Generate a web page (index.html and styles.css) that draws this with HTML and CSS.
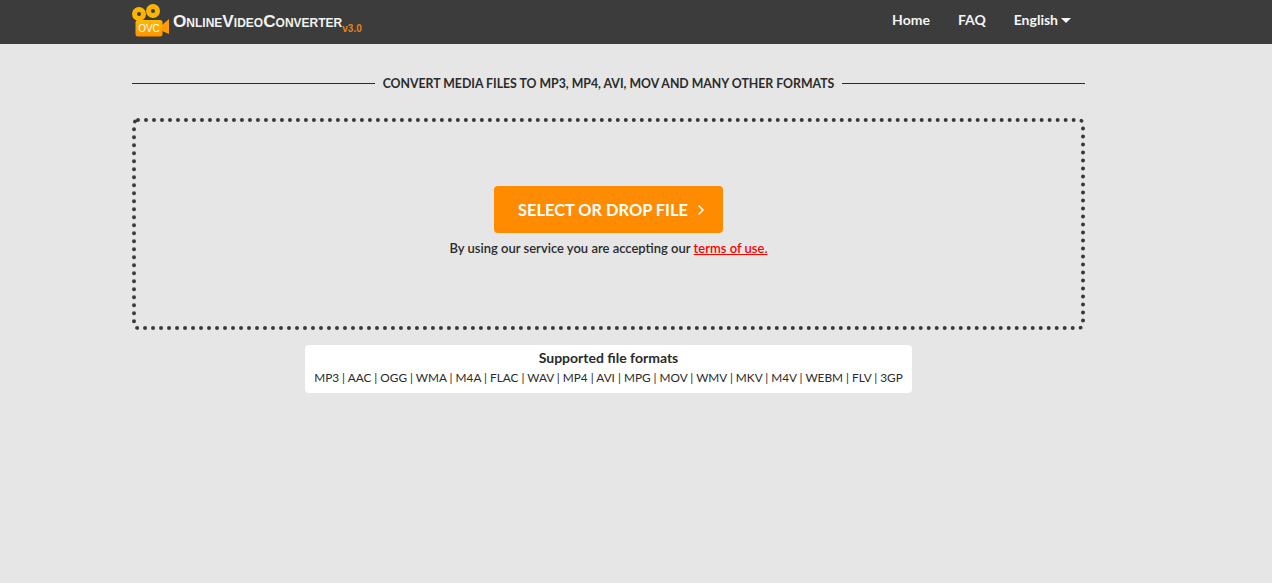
FILE: index.html
```html
<!DOCTYPE html>
<html lang="en">
<head>
    <meta charset="UTF-8">
    <title>OnlineVideoConverter</title>
    <link rel="stylesheet" href="styles.css">
</head>
<body>
    <div class="header">
        <div class="header-inner">
            <a href="#" class="logo">
                <svg class="logo-icon" width="38" height="34" viewBox="0 0 38 34">
                    <defs>
                        <linearGradient id="ovcBody" x1="0" y1="0" x2="0" y2="1">
                            <stop offset="0" stop-color="#ffb800"/>
                            <stop offset="1" stop-color="#ff9400"/>
                        </linearGradient>
                    </defs>
                    <circle cx="7" cy="11" r="7" fill="#ffb400"/>
                    <circle cx="21" cy="8" r="7" fill="#ffb400"/>
                    <circle cx="7" cy="11" r="2" fill="#3c3c3c"/>
                    <circle cx="21" cy="8" r="2" fill="#3c3c3c"/>
                    <rect x="3.5" y="17" width="27" height="16.5" rx="2.5" fill="url(#ovcBody)"/>
                    <path d="M30 22 L37 16 V31 L30 28 Z" fill="#ff9a00"/>
                    <text x="17" y="29" class="logo-icon-text">OVC</text>
                </svg>
                <span class="logo-name">OnlineVideoConverter</span><span class="logo-version">v3.0</span>
            </a>
            <nav class="nav-menu">
                <a href="#" class="nav-link">Home</a>
                <a href="#" class="nav-link">FAQ</a>
                <a href="#" class="nav-link">English<span class="caret"></span></a>
            </nav>
        </div>
    </div>

    <div class="main">
        <div class="title-row">
            <span class="title-line"></span>
            <h1>Convert media files to MP3, MP4, AVI, MOV and many other formats</h1>
            <span class="title-line"></span>
        </div>

        <div class="drop-zone">
            <button class="select-button">SELECT OR DROP FILE
                <svg class="chevron" width="8" height="12" viewBox="0 0 8 12"><path d="M1.5 1.5 L6 6 L1.5 10.5" fill="none" stroke="#fff" stroke-width="1.5"/></svg>
            </button>
            <p class="terms">By using our service you are accepting our <a href="#">terms of use.</a></p>
        </div>

        <div class="formats">
            <strong>Supported file formats</strong>
            <span>MP3 | AAC | OGG | WMA | M4A | FLAC | WAV | MP4 | AVI | MPG | MOV | WMV | MKV | M4V | WEBM | FLV | 3GP</span>
        </div>
    </div>
</body>
</html>
```

FILE: styles.css
```css
/* General Styles */
body {
    margin: 0;
    min-height: 583px;
    font-family: 'Lato', 'Open Sans', sans-serif;
    background-color: #e6e6e6;
    color: #2b2b2b;
    overflow: hidden;
}

/* Header Styles */
.header {
    height: 44px;
    background-color: #3c3c3c;
}

.header-inner {
    display: flex;
    justify-content: space-between;
    align-items: center;
    width: 953px;
    height: 44px;
    margin-left: 132px;
}

.logo {
    display: flex;
    align-items: center;
    color: #fff;
    text-decoration: none;
    height: 44px;
}

.logo-icon {
    margin: -4px 3px 0 0;
}

.logo-icon-text {
    font-family: 'Liberation Sans', sans-serif;
    font-size: 10px;
    fill: #fff;
    text-anchor: middle;
}

.logo-name {
    font-family: 'Liberation Sans', sans-serif;
    font-size: 17.2px;
    font-weight: bold;
    font-variant: small-caps;
    color: #f2f2f2;
    margin-top: -2px;
}

.logo-version {
    font-family: 'Liberation Sans', sans-serif;
    font-size: 10px;
    font-weight: bold;
    color: #e08418;
    margin: 13px 0 0;
}

.nav-menu {
    display: flex;
    gap: 28px;
    margin: -6px 14px 0 0;
}

.nav-link {
    color: #f5f5f5;
    font-size: 14px;
    font-weight: bold;
    text-decoration: none;
}

.caret {
    display: inline-block;
    margin-left: 3px;
    vertical-align: 2px;
    border-top: 5px solid #f5f5f5;
    border-left: 5px solid transparent;
    border-right: 5px solid transparent;
}

/* Main Content Styles */
.main {
    width: 953px;
    margin-left: 132px;
}

.title-row {
    display: flex;
    align-items: center;
    gap: 8px;
    height: 20px;
    margin-top: 29px;
}

.title-line {
    flex: 1;
    height: 1px;
    background-color: #2b2b2b;
}

.title-row h1 {
    margin: 0;
    font-size: 12.3px;
    font-weight: bold;
    text-transform: uppercase;
    white-space: nowrap;
}

.drop-zone {
    display: flex;
    flex-direction: column;
    align-items: center;
    box-sizing: border-box;
    height: 212px;
    margin-top: 25px;
    padding-top: 64px;
    border: 4px dotted #3a3a3a;
    border-radius: 6px;
}

.select-button {
    display: flex;
    align-items: center;
    justify-content: center;
    gap: 9px;
    width: 229px;
    height: 47px;
    padding: 0 0 0 6px;
    font-family: inherit;
    font-size: 16.4px;
    font-weight: bold;
    color: #fff;
    background-color: #ff8c00;
    border: none;
    border-radius: 4px;
}

.terms {
    margin: 7px 0 0;
    font-size: 13px;
    font-weight: 600;
    line-height: 16px;
}

.terms a {
    color: #f00;
}

.formats {
    display: flex;
    flex-direction: column;
    align-items: center;
    gap: 1px;
    box-sizing: border-box;
    width: 607px;
    height: 48px;
    margin: 15px 0 0 173px;
    padding-top: 3px;
    background-color: #fff;
    border-radius: 4px;
    font-size: 11.8px;
    line-height: 19px;
}

.formats strong {
    font-size: 14px;
}
```
